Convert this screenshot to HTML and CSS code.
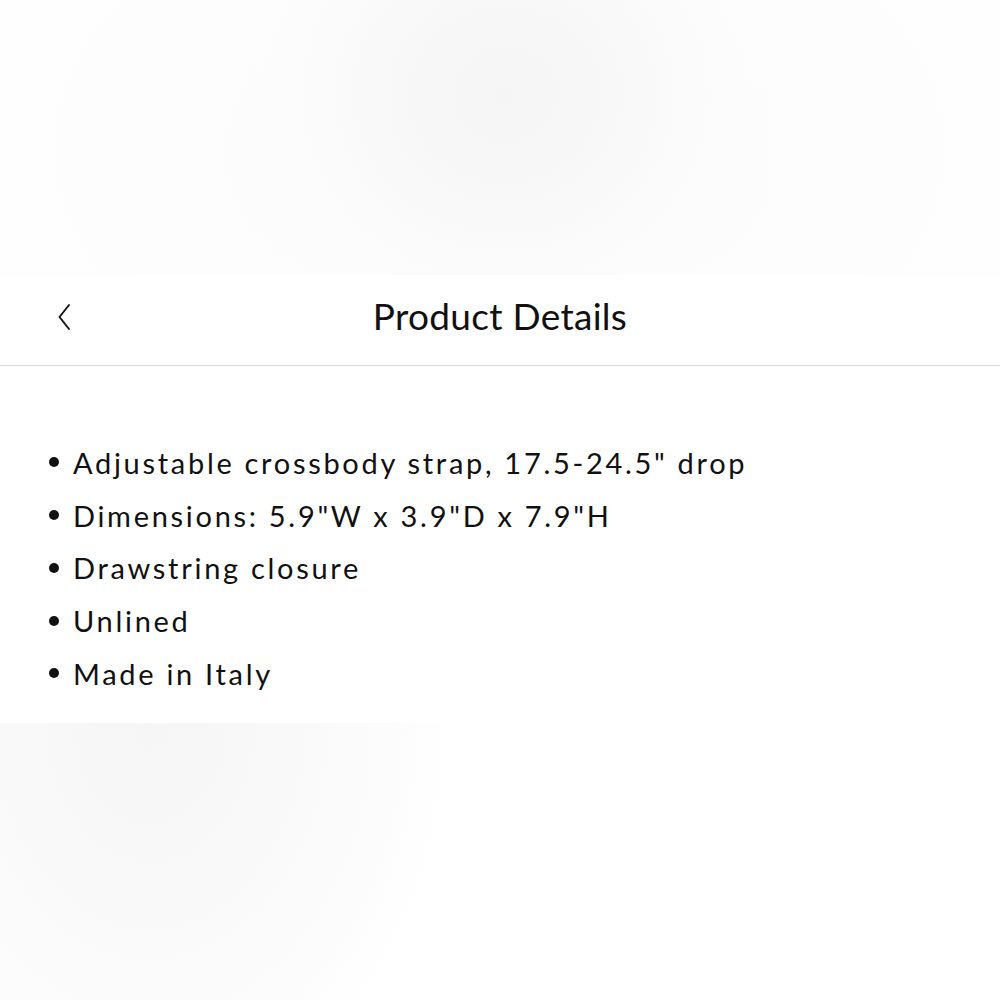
FILE: index.html
```html
<!DOCTYPE html>
<html>
<head>
<meta charset="utf-8">
<link rel="stylesheet" href="styles.css">
</head>
<body>
<div class="backdrop backdrop-top"></div>
<section class="panel">
  <header class="bar">
    <button class="back" aria-label="Back">
      <svg width="16" height="28" viewBox="0 0 16 28"><path d="M13 2 L3.5 14 L13 26" fill="none" stroke="#111" stroke-width="1.9" stroke-linecap="round" stroke-linejoin="round"/></svg>
    </button>
    <h1 class="title">Product Details</h1>
    <span class="spacer"></span>
  </header>
  <ul class="details">
    <li><span class="dot"></span>Adjustable crossbody strap, 17.5-24.5" drop</li>
    <li><span class="dot"></span>Dimensions: 5.9"W x 3.9"D x 7.9"H</li>
    <li><span class="dot"></span>Drawstring closure</li>
    <li><span class="dot"></span>Unlined</li>
    <li><span class="dot"></span>Made in Italy</li>
  </ul>
</section>
<div class="backdrop backdrop-bottom"></div>
</body>
</html>
```
FILE: styles.css
```css
html, body {
  margin: 0;
  padding: 0;
  background: #ffffff;
  font-family: Lato, "Open Sans", sans-serif;
  color: #111;
}
.backdrop {
  width: 1000px;
}
.backdrop-top {
  height: 275px;
  background:
    radial-gradient(ellipse 240px 220px at 505px 95px, #f5f5f5 0%, #f8f8f8 45%, #fbfbfb 80%, rgba(252,252,252,0) 100%),
    radial-gradient(ellipse 560px 360px at 500px 150px, #fcfcfc 0%, #fdfdfd 70%, #fefefe 100%);
}
.backdrop-bottom {
  height: 277px;
  background:
    radial-gradient(ellipse 300px 400px at 150px 0px, #f6f6f6 0%, #f9f9f9 45%, #fcfcfc 80%, rgba(255,255,255,0) 100%),
    #ffffff;
}
.panel {
  background: #fff;
  height: 448px;
}
.bar {
  height: 91px;
  border-bottom: 1.5px solid #d6d6d6;
  display: grid;
  grid-template-columns: 120px 1fr 120px;
  align-items: center;
  box-sizing: border-box;
  padding-bottom: 10px;
}
.back {
  background: none;
  border: 0;
  padding: 0 0 0 56px;
  display: flex;
  align-items: center;
  height: 30px;
  margin-top: 4px;
}
.title {
  margin: 0;
  text-align: center;
  font-size: 37px;
  font-weight: 400;
  color: #111;
  letter-spacing: 0.3px;
}
.details {
  list-style: none;
  margin: 0;
  padding: 70px 0 0 49px;
}
.details li {
  display: flex;
  align-items: center;
  height: 52.75px;
  font-size: 29px;
  letter-spacing: 2.7px;
  color: #111;
}
.dot {
  width: 10px;
  height: 10px;
  border-radius: 50%;
  background: #111;
  margin-right: 14px;
  flex: none;
}
```
